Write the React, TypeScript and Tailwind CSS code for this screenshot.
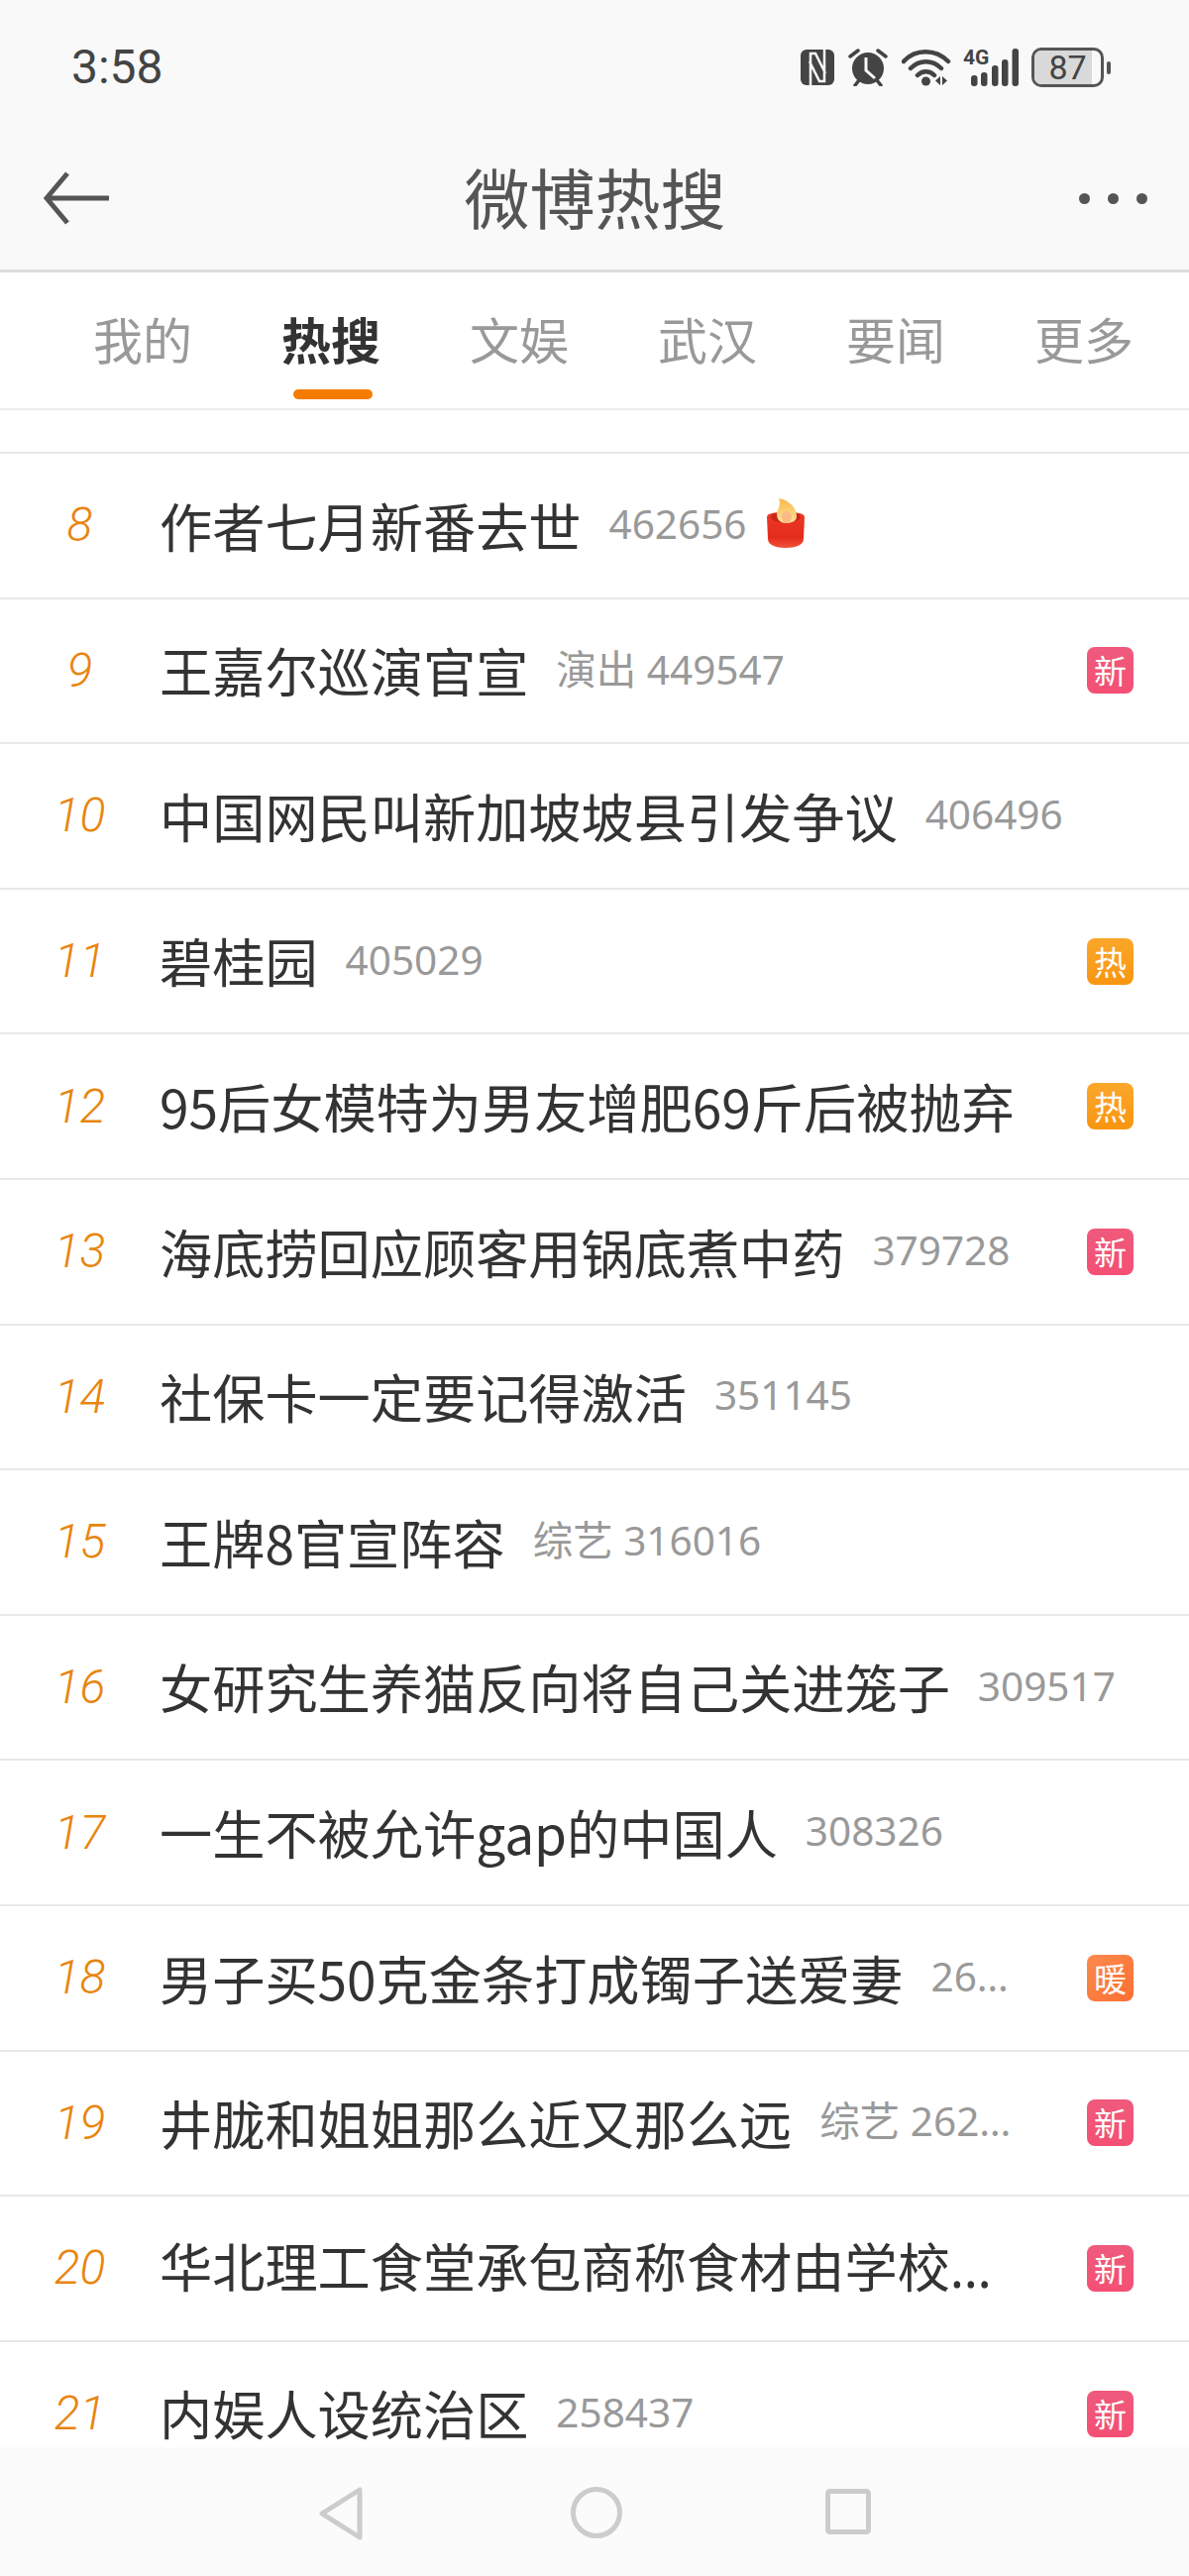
const tabs = ['我的', '热搜', '文娱', '武汉', '要闻', '更多'];

type Badge = '新' | '热' | '暖';

interface Row {
  rank: number;
  title: string;
  sub?: string;
  badge?: Badge;
  candle?: boolean;
  clipped?: boolean;
}

const rows: Row[] = [
  { rank: 8, title: '作者七月新番去世', sub: '462656', candle: true },
  { rank: 9, title: '王嘉尔巡演官宣', sub: '演出 449547', badge: '新' },
  { rank: 10, title: '中国网民叫新加坡坡县引发争议', sub: '406496' },
  { rank: 11, title: '碧桂园', sub: '405029', badge: '热' },
  { rank: 12, title: '95后女模特为男友增肥69斤后被抛弃', badge: '热' },
  { rank: 13, title: '海底捞回应顾客用锅底煮中药', sub: '379728', badge: '新' },
  { rank: 14, title: '社保卡一定要记得激活', sub: '351145' },
  { rank: 15, title: '王牌8官宣阵容', sub: '综艺 316016' },
  { rank: 16, title: '女研究生养猫反向将自己关进笼子', sub: '309517' },
  { rank: 17, title: '一生不被允许gap的中国人', sub: '308326' },
  { rank: 18, title: '男子买50克金条打成镯子送爱妻', sub: '268642', badge: '暖' },
  { rank: 19, title: '井胧和姐姐那么近又那么远', sub: '综艺 262987', badge: '新' },
  { rank: 20, title: '华北理工食堂承包商称食材由学校指定采购', badge: '新', clipped: true },
  { rank: 21, title: '内娱人设统治区', sub: '258437', badge: '新' },
];

function BadgeTag({ kind }: { kind: Badge }) {
  const bg =
    kind === '新'
      ? 'bg-gradient-to-b from-[#ef5a7c] to-[#f44f74]'
      : kind === '热'
        ? 'bg-gradient-to-b from-[#fba72a] to-[#f8950f]'
        : 'bg-gradient-to-br from-[#fb8a4c] to-[#fb6f33]';
  return (
    <span className={`ml-[70px] flex h-[47px] w-[47px] shrink-0 items-center justify-center rounded-[8px] text-[33px] leading-none text-white ${bg}`}>
      {kind}
    </span>
  );
}

function Candle() {
  return (
    <svg viewBox="0 0 40 50" className="ml-[19px] h-[50px] w-[40px] shrink-0 -translate-y-[1px]">
      <defs>
        <linearGradient id="wax" x1="0" y1="0" x2="0" y2="1">
          <stop offset="0" stopColor="#ee3a25" />
          <stop offset="0.7" stopColor="#e42c1c" />
          <stop offset="1" stopColor="#f2513a" />
        </linearGradient>
        <linearGradient id="flame" x1="0" y1="0" x2="0" y2="1">
          <stop offset="0" stopColor="#f7b84a" />
          <stop offset="1" stopColor="#fde29a" />
        </linearGradient>
      </defs>
      <path d="M1 19 C1 15 8 14 20 14 C32 14 39 15 39 19 L38 41 C38 47 30 50 20 50 C10 50 2 47 2 41 Z" fill="url(#wax)" />
      <ellipse cx="20" cy="19" rx="15" ry="5.500" fill="#c9261a" />
      <path d="M13 0 C24 2 31 10 31 18 C31 23 26 25 21 25 C15 25 11 22 11 16 C11 10 16 8 13 0 Z" fill="url(#flame)" />
      <ellipse cx="21" cy="19" rx="5" ry="6" fill="#fbb988" />
    </svg>
  );
}

function StatusIcons() {
  return (
    <div className="flex items-center text-[#444]">
      {/* NFC */}
      <svg viewBox="0 0 34 36" className="h-[36px] w-[34px]">
        <rect width="34" height="36" rx="6" fill="currentColor" />
        <path d="M10 36V4h5l10 20M24 0v32h-5L9 12" fill="none" stroke="#f9f9f9" strokeWidth="2.500" />
      </svg>
      {/* alarm */}
      <svg viewBox="0 0 40 38" className="ml-[14px] h-[38px] w-[40px]">
        <circle cx="20" cy="20" r="16" fill="currentColor" />
        <path d="M2 8l8-6M38 8l-8-6M7 37l4-5M33 37l-4-5" stroke="currentColor" strokeWidth="3.500" strokeLinecap="round" />
        <path d="M18 9v13l9 8" fill="none" stroke="#f9f9f9" strokeWidth="3" />
      </svg>
      {/* wifi */}
      <svg viewBox="0 0 50 38" className="ml-[14px] h-[38px] w-[50px]">
        <path d="M2 13C14 0 34 0 47 13M9 20C18 11 31 11 40 20M16 27C21 22 28 22 33 27" fill="none" stroke="currentColor" strokeWidth="4.500" strokeLinecap="round" />
        <circle cx="24.500" cy="33" r="4.500" fill="currentColor" />
        <path d="M39 28v9l-5-4.500ZM41 28v9l5-4.500Z" fill="currentColor" />
      </svg>
      {/* 4G + signal */}
      <div className="relative ml-[12px] h-[38px] w-[57px]">
        <span className="absolute left-0 top-[-1px] font-['Roboto',sans-serif] text-[21px] font-bold leading-[20px]">4G</span>
        <svg viewBox="0 0 57 38" className="h-[38px] w-[57px]">
          <rect x="8" y="27" width="6.500" height="11" rx="3" fill="currentColor" />
          <rect x="18" y="24" width="6.500" height="14" rx="3" fill="currentColor" />
          <rect x="29" y="17" width="6.500" height="21" rx="3" fill="currentColor" />
          <rect x="39" y="11" width="6.500" height="27" rx="3" fill="currentColor" />
          <rect x="49.500" y="0" width="6.500" height="38" rx="3" fill="currentColor" />
        </svg>
      </div>
      {/* battery */}
      <div className="relative ml-[12px] h-[40px] w-[73px] overflow-hidden rounded-[10px] border-[3px] border-[#555] bg-[#f9f9f9]">
        <div className="h-full w-[87%] bg-[#d9d9d9]" />
        <span className="absolute inset-0 flex items-center justify-center font-['Roboto',sans-serif] text-[34px] leading-none text-[#444]">87</span>
      </div>
      <div className="ml-[3px] h-[13px] w-[4px] rounded-[2px] bg-[#555]" />
    </div>
  );
}

export default function App() {
  return (
    <div className="flex h-[2600px] w-[1200px] flex-col overflow-hidden bg-white font-['Noto_Sans_CJK_SC',sans-serif]">
      {/* status bar + title */}
      <header className="shrink-0 border-b-[3px] border-[#dcdcdc] bg-[#f9f9f9]">
        <div className="flex h-[136px] items-center justify-between pl-[72px] pr-[79px]">
          <span className="font-['Roboto',sans-serif] text-[48px] leading-none text-[#444]">3:58</span>
          <StatusIcons />
        </div>
        <div className="flex h-[136px] items-center justify-between pb-[8px] pl-[44px] pr-[42px]">
          <svg viewBox="0 0 68 54" className="h-[54px] w-[68px] text-[#555]">
            <path d="M66 27H3M24 2 3 27l21 25" fill="none" stroke="currentColor" strokeWidth="5" />
          </svg>
          <h1 className="pb-[6px] text-[66px] font-normal leading-none text-[#555]">微博热搜</h1>
          <div className="flex w-[69px] justify-between">
            <span className="h-[11px] w-[11px] rounded-full bg-[#555]" />
            <span className="h-[11px] w-[11px] rounded-full bg-[#555]" />
            <span className="h-[11px] w-[11px] rounded-full bg-[#555]" />
          </div>
        </div>
      </header>

      {/* tabs */}
      <nav className="grid h-[139px] shrink-0 grid-cols-6 border-b-2 border-[#ececec] pl-[49px] pr-[11px]">
        {tabs.map((tab) => (
          <div key={tab} className="relative flex items-center justify-center pb-[6px]">
            <span className={tab === '热搜' ? 'text-[50px] font-bold leading-none text-[#333]' : 'text-[50px] leading-none text-[#999]'}>{tab}</span>
            {tab === '热搜' && <span className="absolute bottom-[9px] left-[calc(50%+2px)] h-[10px] w-[80px] -translate-x-1/2 rounded-[5px] bg-[#f57c00]" />}
          </div>
        ))}
      </nav>

      {/* list */}
      <main className="min-h-0 flex-1 overflow-hidden pt-[42px]">
        <div className="border-t-2 border-[#e8e8e8]">
          {rows.map((row) => (
            <div key={row.rank} className="flex h-[146.600px] items-center border-b-2 border-[#e8e8e8] pr-[56px]">
              <span className="w-[161px] shrink-0 text-center font-['Roboto',sans-serif] text-[48px] font-light italic leading-none text-[#e8850f]">{row.rank}</span>
              <div className="flex min-w-0 flex-1 items-center pb-[2px]">
                <span className={row.clipped ? "min-w-0 truncate font-['Noto_Sans','Noto_Sans_CJK_SC',sans-serif] text-[53.200px] leading-[1.5] text-[#333]" : 'shrink-0 whitespace-nowrap text-[53.200px] leading-none text-[#333]'}>{row.title}</span>
                {row.sub && <span className="ml-[28px] min-w-0 truncate font-['Noto_Sans','Noto_Sans_CJK_SC',sans-serif] text-[40.500px] leading-[1.5] text-[#999]">{row.sub}</span>}
                {row.candle && <Candle />}
              </div>
              {row.badge && <BadgeTag kind={row.badge} />}
            </div>
          ))}
        </div>
      </main>

      {/* system nav */}
      <footer className="flex h-[130px] shrink-0 items-start bg-[#fbfbfb] pt-[40px]">
        <div className="flex w-full justify-center text-[#ccc]">
          <svg viewBox="0 0 44 54" className="h-[54px] w-[44px]">
            <path d="M41 3v48L3 27Z" fill="none" stroke="currentColor" strokeWidth="5" strokeLinejoin="round" />
          </svg>
          <svg viewBox="0 0 52 52" className="ml-[210px] h-[52px] w-[52px]">
            <circle cx="26" cy="26" r="23.500" fill="none" stroke="currentColor" strokeWidth="5" />
          </svg>
          <svg viewBox="0 0 46 46" className="ml-[205px] mt-[2px] h-[46px] w-[46px]">
            <rect x="2.500" y="2.500" width="41" height="41" rx="2" fill="none" stroke="currentColor" strokeWidth="5" />
          </svg>
        </div>
      </footer>
    </div>
  );
}
